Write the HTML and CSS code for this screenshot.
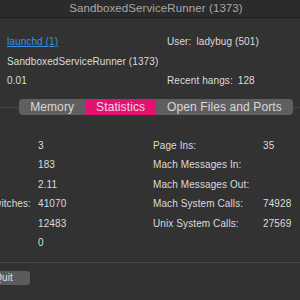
FILE: index.html
```html
<!DOCTYPE html>
<html lang="en">
<head>
  <meta charset="UTF-8" />
  <meta name="viewport" content="width=device-width, initial-scale=1.0" />
  <title>SandboxedServiceRunner (1373)</title>
  <link rel="stylesheet" href="styles.css">
</head>
<body>
  <div class="window">
    <header class="titlebar">SandboxedServiceRunner (1373)</header>
    <div class="info">
      <a class="link" href="#">launchd (1)</a>
      <span><span class="key">User:</span>ladybug (501)</span>
      <span>SandboxedServiceRunner (1373)</span>
      <span></span>
      <span>0.01</span>
      <span><span class="key">Recent hangs:</span>128</span>
    </div>
    <div class="tabs">
      <div class="tab">Memory</div>
      <div class="tab active">Statistics</div>
      <div class="tab">Open Files and Ports</div>
    </div>
    <div class="panel">
      <div class="stats">
        <span></span><span>3</span>
        <span>Page Ins:</span><span>35</span>
        <span></span><span>183</span>
        <span>Mach Messages In:</span><span></span>
        <span></span><span>2.11</span>
        <span>Mach Messages Out:</span><span></span>
        <span class="label-left">Context Switches:</span><span>41070</span>
        <span>Mach System Calls:</span><span>74928</span>
        <span></span><span>12483</span>
        <span>Unix System Calls:</span><span>27569</span>
        <span></span><span>0</span>
        <span></span><span></span>
      </div>
    </div>
    <div class="footer">
      <button class="btn">Quit</button>
    </div>
  </div>
</body>
</html>
```

FILE: styles.css
```css
body {
  margin: 0;
  background: #323232;
  overflow: hidden;
  font-family: "Liberation Sans", Arial, sans-serif;
  font-size: 10px;
  letter-spacing: 0.1px;
  color: #dcdcdc;
}
.window {
  width: 512px;
  margin-left: -100px;
}
.titlebar {
  height: 17px;
  line-height: 17px;
  background: #2b2b2b;
  border-bottom: 1px solid #1c1c1c;
  text-align: center;
  font-size: 11.5px;
  color: #a9a9a9;
}
.info {
  display: grid;
  grid-template-columns: 160px auto;
  padding: 14px 0 0 107px;
  line-height: 19.5px;
}
.link {
  color: #3d8fe8;
  text-decoration: underline;
}
.key {
  margin-right: 5px;
}
.tabs {
  position: relative;
  z-index: 1;
  display: flex;
  justify-content: center;
  margin-top: 8px;
  height: 16px;
}
.tab {
  padding: 0 11px;
  line-height: 16px;
  font-size: 12px;
  background: #5f5f5f;
  color: #d9d9d9;
}
.tab:first-child {
  border-radius: 4px 0 0 4px;
}
.tab:last-child {
  border-radius: 0 4px 4px 0;
}
.tab.active {
  background: #e2136f;
  color: #f3d7e4;
}
.panel {
  margin-top: -8px;
  border-top: 1px solid #4a4a4a;
  border-bottom: 1px solid #474747;
  padding: 28px 0 9px 38px;
}
.stats {
  display: grid;
  grid-template-columns: 100px 115px 110px 60px;
  line-height: 19.5px;
}
.label-left {
  text-align: right;
  padding-right: 7px;
  white-space: nowrap;
}
.footer {
  padding: 8px 0 0 77px;
}
.btn {
  width: 53px;
  height: 14px;
  padding: 0;
  border: none;
  border-radius: 3px;
  background: #5b5b5b;
  color: #dedede;
  font-family: inherit;
  font-size: 10px;
  letter-spacing: 0.1px;
  line-height: 14px;
}
```
